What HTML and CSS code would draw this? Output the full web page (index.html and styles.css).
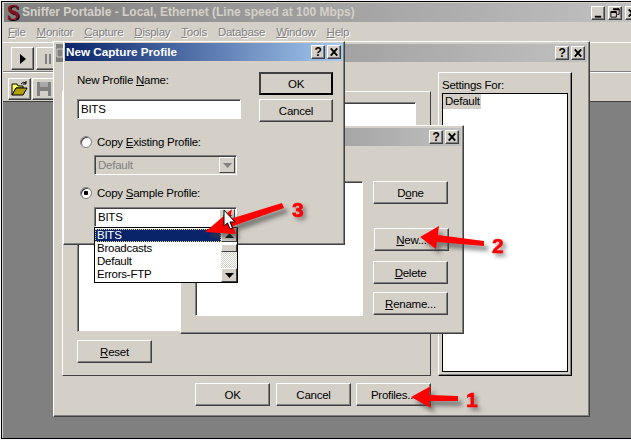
FILE: index.html
```html
<!DOCTYPE html>
<html>
<head>
<meta charset="utf-8">
<title>Sniffer Portable</title>
<link rel="stylesheet" href="styles.css">
</head>
<body>
<div class="app">
  <div class="main-title">
    <span class="logo">S</span>
    <span class="main-title-text">Sniffer Portable - Local, Ethernet (Line speed at 100 Mbps)</span>
    <div class="win-controls">
      <span class="cap-btn"><svg width="13" height="12" viewBox="0 0 13 12"><rect x="3" y="9" width="7" height="2" fill="#000"/></svg></span>
      <span class="cap-btn"><svg width="13" height="12" viewBox="0 0 13 12"><path d="M5 1.5h6v6h-2M5 1v2M2 4.5h6v6H2z" fill="none" stroke="#000" stroke-width="1"/><path d="M5 1h6v2H5zM2 4h6v2H2z" fill="#000"/></svg></span>
      <span class="cap-btn"><svg width="13" height="12" viewBox="0 0 13 12"><path d="M3 2l7 8M10 2l-7 8" stroke="#000" stroke-width="2"/></svg></span>
    </div>
  </div>
  <div class="menubar">
    <span class="menu"><u>F</u>ile</span>
    <span class="menu"><u>M</u>onitor</span>
    <span class="menu"><u>C</u>apture</span>
    <span class="menu"><u>D</u>isplay</span>
    <span class="menu"><u>T</u>ools</span>
    <span class="menu">Data<u>b</u>ase</span>
    <span class="menu"><u>W</u>indow</span>
    <span class="menu"><u>H</u>elp</span>
  </div>
  <div class="toolbar toolbar-top">
    <span class="tool"><svg width="8" height="10" viewBox="0 0 8 10"><path d="M1 0l6 5-6 5z" fill="#000"/></svg></span>
    <span class="tool"><svg width="8" height="10" viewBox="0 0 8 10"><path d="M1 0h2v10H1zM5 0h2v10H5z" fill="#808080"/></svg></span>
  </div>
  <div class="toolbar toolbar-bottom">
    <span class="tool tool-small"><svg width="18" height="16" viewBox="0 0 18 16"><path d="M1 3h5l1 2h5v2H5L1 14z" fill="#ffff66" stroke="#000" stroke-width="1"/><path d="M1 14l4-7h11l-4 7z" fill="#b0a000" stroke="#000" stroke-width="1"/><path d="M10 3q2-3 5-1M15 0v3h-3" fill="none" stroke="#000" stroke-width="1"/></svg></span>
    <span class="tool tool-small"><svg width="16" height="16" viewBox="0 0 16 16"><path d="M1 1h14v14H1z" fill="#808080"/><path d="M4 1h8v5H4z" fill="#a8a8a8"/><path d="M4 10h8v5H4z" fill="#d4d0c8"/></svg></span>
  </div>
  <div class="desktop"></div>

  <section class="dialog dialog-settings">
    <header class="cap cap-grey">
      <svg class="cap-icon" width="8" height="10" viewBox="0 0 8 10"><path d="M1 1h6v8H1z" fill="none" stroke="#d4d0c8"/></svg>
      <span class="cap-fill"></span>
      <span class="cap-btn"><b class="q">?</b></span>
      <span class="cap-btn"><svg width="13" height="12" viewBox="0 0 13 12"><path d="M3 2l7 8M10 2l-7 8" stroke="#000" stroke-width="2"/></svg></span>
    </header>
    <div class="settings-grid">
      <div class="group-left">
        <div class="big-list"></div>
        <button class="btn reset"><u>R</u>eset</button>
      </div>
      <div class="group-right">
        <div class="group-label">Settings For:</div>
        <div class="settings-list"><span class="settings-item">Default</span></div>
      </div>
      <div class="footer">
        <button class="btn btn-first">OK</button>
        <button class="btn">Cancel</button>
        <button class="btn">Profiles...</button>
      </div>
    </div>
  </section>

  <section class="dialog dialog-profiles">
    <header class="cap cap-grey">
      <span class="cap-fill"></span>
      <span class="cap-btn"><b class="q">?</b></span>
      <span class="cap-btn"><svg width="13" height="12" viewBox="0 0 13 12"><path d="M3 2l7 8M10 2l-7 8" stroke="#000" stroke-width="2"/></svg></span>
    </header>
    <div class="profiles-body">
      <div class="profile-list"></div>
      <div class="profile-buttons">
        <button class="btn">D<u>o</u>ne</button>
        <button class="btn btn-new"><u>N</u>ew...</button>
        <button class="btn btn-delete"><u>D</u>elete</button>
        <button class="btn btn-rename"><u>R</u>ename...</button>
      </div>
    </div>
  </section>

  <section class="dialog dialog-new">
    <header class="cap cap-blue">
      <span class="cap-title">New Capture Profile</span>
      <span class="cap-fill"></span>
      <span class="cap-btn"><b class="q">?</b></span>
      <span class="cap-btn"><svg width="13" height="12" viewBox="0 0 13 12"><path d="M3 2l7 8M10 2l-7 8" stroke="#000" stroke-width="2"/></svg></span>
    </header>
    <div class="new-body">
      <div class="new-form">
        <label class="field-label">New Profile <u>N</u>ame:</label>
        <div class="input">BITS</div>
        <div class="radio-row radio-first"><span class="radio"></span><span>Copy <u>E</u>xisting Profile:</span></div>
        <div class="combo combo-disabled">
          <span class="combo-text">Default</span>
          <span class="drop-btn"><svg width="9" height="5" viewBox="0 0 9 5"><path d="M0 0h9L4.500 5z" fill="#808080"/></svg></span>
        </div>
        <div class="radio-row radio-second"><span class="radio radio-on"></span><span>Copy <u>S</u>ample Profile:</span></div>
        <div class="combo combo-open">
          <span class="combo-text">BITS</span>
          <span class="drop-btn"><svg width="9" height="5" viewBox="0 0 9 5"><path d="M0 0h9L4.500 5z" fill="#000"/></svg></span>
          <div class="dropdown">
            <div class="options">
              <div class="option option-on">BITS</div>
              <div class="option">Broadcasts</div>
              <div class="option">Default</div>
              <div class="option">Errors-FTP</div>
            </div>
            <div class="scrollbar">
              <span class="sb-btn"><svg width="9" height="5" viewBox="0 0 9 5"><path d="M0 5h9L4.500 0z" fill="#000"/></svg></span>
              <span class="sb-thumb"></span>
              <span class="sb-track"></span>
              <span class="sb-btn"><svg width="9" height="5" viewBox="0 0 9 5"><path d="M0 0h9L4.500 5z" fill="#000"/></svg></span>
            </div>
          </div>
        </div>
      </div>
      <div class="new-buttons">
        <button class="btn btn-default">OK</button>
        <button class="btn">Cancel</button>
      </div>
    </div>
  </section>

  <svg class="annotations" width="631" height="440" viewBox="0 0 631 440">
    <defs>
      <filter id="soft" x="-30%" y="-30%" width="160%" height="160%"><feGaussianBlur stdDeviation="2.200"/></filter>
    </defs>
    <g class="shadow" filter="url(#soft)" transform="translate(4 5)">
      <path d="M411 397L431 386L429 395L458 396V401L429 401L431 408Z"/>
      <path d="M420 237L439 226L438 235L484 241V246L437 242L436 249Z"/>
      <path d="M205 232L232 209L230 219L282 203L284 208L233 226L236 234Z"/>
    </g>
    <g class="arrow">
      <path d="M411 397L431 386L429 395L458 396V401L429 401L431 408Z"/>
      <path d="M420 237L439 226L438 235L484 241V246L437 242L436 249Z"/>
      <path d="M205 232L232 209L230 219L282 203L284 208L233 226L236 234Z"/>
    </g>
    <text class="num" x="466" y="407">1</text>
    <text class="num" x="492" y="253">2</text>
    <text class="num" x="292" y="217">3</text>
    <path class="cursor" d="M224 210V226L227.500 223L230 229L232.500 228L230 222H235Z"/>
  </svg>
</div>
</body>
</html>
```
FILE: styles.css
```css
* { box-sizing: border-box; }
html, body { margin: 0; padding: 0; background: #f4f4fa; }
body { width: 631px; height: 440px; overflow: hidden; font-family: "Liberation Sans", Arial, sans-serif; font-size: 11.5px; letter-spacing: -0.25px; color: #000; }
u { text-decoration: underline; }

.app { position: relative; width: 630px; height: 438px; margin: 1px 0 0 1px; border-top: 1px solid #000; border-left: 1px solid #000; border-bottom: 1px solid #000; background: #d4d0c8; display: flex; flex-direction: column; padding: 1px 0 0 1px; overflow: hidden; }

.main-title { height: 19px; margin-left: 1px; display: flex; align-items: center; background: linear-gradient(90deg, #808080, #c0c0c0); flex: none; }
.logo { width: 18px; margin-top: -1px; text-align: center; font: bold 23px/19px "Liberation Serif", serif; color: #8a1020; text-shadow: 1px 1px 0 #000; }
.main-title-text { font-weight: bold; font-size: 12px; letter-spacing: 0; color: #d4d0c8; white-space: nowrap; padding-bottom: 1px; }
.win-controls { margin-left: auto; display: flex; gap: 3px; margin-right: -8px; }

.cap-btn { width: 14px; height: 14px; background: #d4d0c8; border: 1px solid; border-color: #fff #404040 #404040 #fff; display: flex; align-items: center; justify-content: center; flex: none; box-shadow: inset -1px -1px #808080; }
.q { font-size: 12px; line-height: 12px; }

.menubar { height: 21px; display: flex; align-items: center; padding-left: 5px; gap: 11px; flex: none; border-bottom: 1px solid #fff; }
.menu { color: #808080; text-shadow: 1px 1px 0 #fff; }

.toolbar { display: flex; flex: none; }
.toolbar-top { height: 29px; padding: 4px 0 0 8px; gap: 2px; border-bottom: 1px solid #808080; }
.toolbar-bottom { height: 30px; padding: 5px 0 0 5px; gap: 1px; border-top: 1px solid #fff; border-bottom: 1px solid #404040; }
.tool { width: 23px; height: 23px; border: 1px solid; border-color: #fff #404040 #404040 #fff; display: flex; align-items: center; justify-content: center; box-shadow: inset -1px -1px #808080; }
.tool-small { height: 22px; }
.desktop { flex: 1; background: #808080; }

.dialog { position: absolute; background: #d4d0c8; border: 1px solid; border-color: #fff #404040 #404040 #fff; box-shadow: inset -1px -1px #808080; display: flex; flex-direction: column; }
.dialog-settings { left: 51px; top: 39px; width: 537px; height: 376px; padding: 2px; }
.dialog-profiles { left: 178px; top: 123px; width: 284px; height: 209px; padding: 2px; }
.dialog-new { left: 61px; top: 39px; width: 282px; height: 204px; padding: 1px; }

.cap { display: flex; align-items: center; gap: 2px; height: 18px; padding-right: 2px; flex: none; }
.cap-grey { background: linear-gradient(90deg, #808080, #c0c0c0); }
.cap-blue { background: linear-gradient(90deg, #0a246a, #a6caf0); }
.cap-title { color: #fff; font-weight: bold; font-size: 11.7px; letter-spacing: 0; padding: 0 0 2px 1px; white-space: nowrap; }
.cap-fill { flex: 1; }

.settings-grid { display: grid; grid-template-columns: 369px 134px; column-gap: 7px; padding: 10px 0 0 6px; }
.group-left { align-self: end; height: 285px; border: 1px solid; border-color: #fff #404040 #404040 #fff; padding: 10px 14px 0; }
.big-list { height: 230px; background: #fff; border: 1px solid; border-color: #808080 #fff #d4d0c8 #808080; box-shadow: inset 1px 1px #404040; }
.reset { margin-top: 8px; }
.group-right { height: 304px; border: 1px solid; border-color: #fff #000 #000 #fff; box-shadow: inset -1px -1px #808080; padding: 3px; display: flex; flex-direction: column; }
.group-label { height: 16px; line-height: 16px; margin-top: 1px; }
.settings-list { flex: 1; background: #fff; border: 1px solid #000; }
.settings-item { display: inline-block; background: #d4d0c8; padding: 0 0 0 2px; height: 15px; line-height: 15px; width: 38px; }
.footer { grid-column: 1; display: flex; justify-content: flex-end; gap: 5px; margin-top: 7px; }
.btn-first { margin-right: 1px; }

.btn { width: 75px; height: 23px; padding: 0; background: #d4d0c8; color: #000; font: 11.5px "Liberation Sans", Arial, sans-serif; letter-spacing: -0.25px; border: 1px solid; border-color: #fff #404040 #404040 #fff; box-shadow: inset -1px -1px #808080; }
.btn-default { border: 2px solid #000; border-color: #404040 #000 #000 #404040; box-shadow: none; }

.profiles-body { display: flex; gap: 10px; padding: 35px 0 0 12px; }
.profile-list { width: 168px; height: 135px; background: #fff; border: 1px solid; border-color: #808080 #fff #fff #808080; box-shadow: inset 1px 1px #404040; }
.profile-buttons { display: flex; flex-direction: column; align-items: flex-start; }
.btn-new { margin: 24px 0 0 1px; }
.btn-delete { margin-top: 10px; }
.btn-rename { margin-top: 8px; }

.new-body { display: grid; grid-template-columns: 164px 74px; column-gap: 18px; padding: 11px 0 0 12px; }
.field-label { display: block; height: 16px; line-height: 16px; }
.input { height: 20px; margin-top: 11px; background: #fff; padding-left: 3px; line-height: 18px; border: 1px solid; border-color: #808080 #fff #fff #808080; box-shadow: inset 1px 1px #404040; }
.radio-row { display: flex; align-items: center; gap: 5px; height: 14px; padding-left: 3px; }
.radio-first { margin-top: 16px; }
.radio-second { margin-top: 11px; }
.radio { width: 12px; height: 12px; border-radius: 50%; background: #fff; border: 1px solid #808080; box-shadow: inset 1px 1px #404040; flex: none; }
.radio-on { background: radial-gradient(circle, #000 0 2px, #fff 2.500px); }
.combo { position: relative; width: 143px; height: 20px; margin: 6px 0 0 17px; display: flex; align-items: center; justify-content: space-between; background: #fff; padding: 0 1px 0 3px; border: 1px solid; border-color: #808080 #fff #fff #808080; box-shadow: inset 1px 1px #404040; }
.combo-disabled { background: #d4d0c8; color: #808080; }
.combo-open { margin-top: 7px; }
.drop-btn { width: 16px; height: 16px; background: #d4d0c8; display: flex; align-items: center; justify-content: center; border: 1px solid; border-color: #fff #404040 #404040 #fff; }
.dropdown { position: absolute; left: -1px; top: 19px; width: 144px; height: 56px; background: #fff; border: 1px solid #000; display: flex; z-index: 2; }
.options { flex: 1; }
.option { height: 13px; line-height: 13px; padding-left: 2px; }
.option-on { height: 13px; margin-top: 1px; background: #0a246a; color: #fff; outline: 1px dotted #e8d890; outline-offset: -1px; }
.scrollbar { width: 16px; display: flex; flex-direction: column; }
.sb-btn { height: 14px; background: #d4d0c8; display: flex; align-items: center; justify-content: center; border: 1px solid; border-color: #fff #404040 #404040 #fff; flex: none; }
.sb-thumb { height: 8px; margin-top: 2px; background: #d4d0c8; border: 1px solid; border-color: #fff #404040 #404040 #fff; flex: none; }
.sb-track { flex: 1; background: repeating-conic-gradient(#d4d0c8 0 25%, #fff 0 50%) 0 0 / 2px 2px; }
.new-buttons { display: flex; flex-direction: column; gap: 4px; }
.new-buttons .btn { width: 74px; }

.annotations { position: absolute; left: -2px; top: -2px; pointer-events: none; z-index: 5; }
.arrow path { fill: #ff0000; }
.shadow path { fill: #404040; opacity: 0.6; }
.num { font: bold 21px "Liberation Sans", Arial, sans-serif; letter-spacing: 0; fill: #f00; stroke: #f00; stroke-width: 0.6px; filter: drop-shadow(3px 3px 2px rgba(64, 64, 64, 0.6)); }
.cursor { fill: #fff; stroke: #000; stroke-width: 1px; }
```
